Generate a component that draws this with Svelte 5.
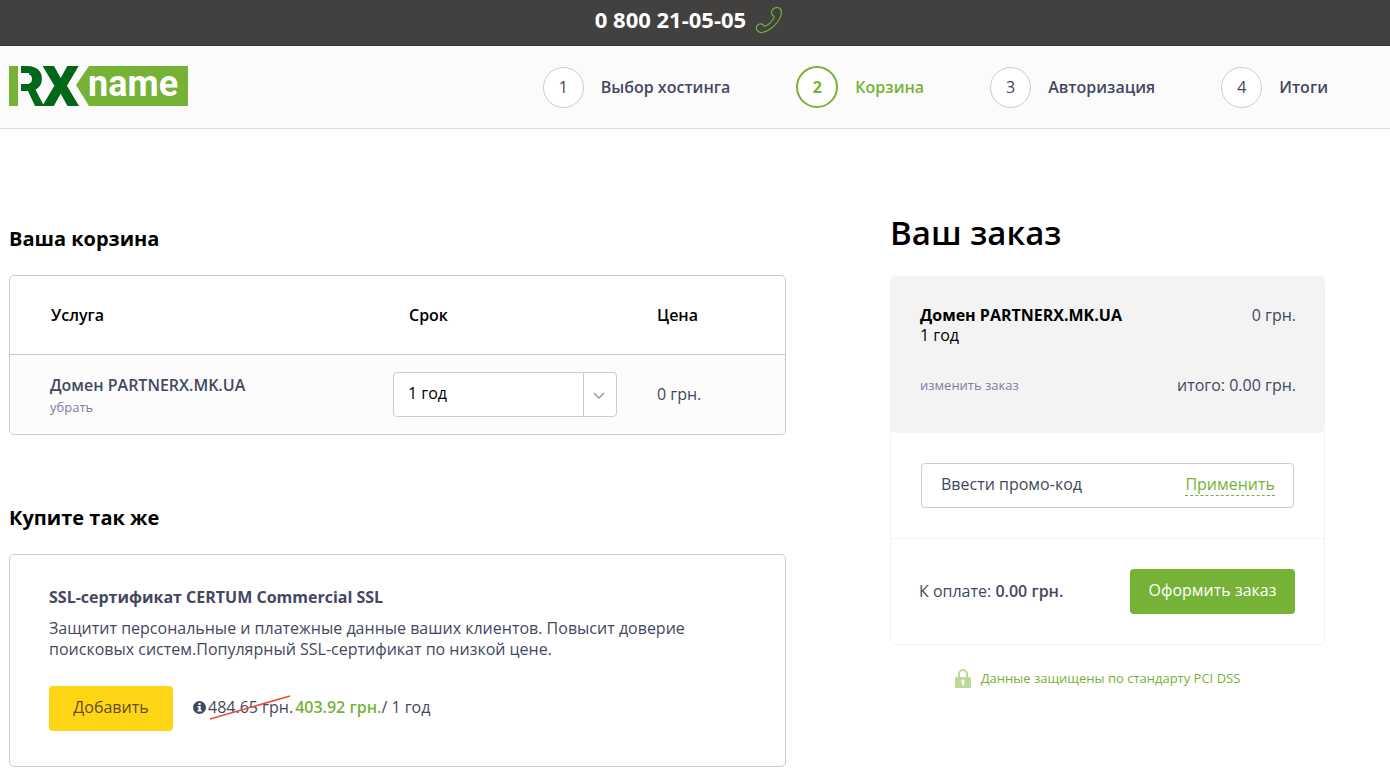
<script>
  const steps = [
    { n: 1, label: 'Выбор хостинга' },
    { n: 2, label: 'Корзина', active: true },
    { n: 3, label: 'Авторизация' },
    { n: 4, label: 'Итоги' }
  ];
  let term = $state('1 год');
</script>

<div class="topbar">
  <a class="phone" href="#call">
    0 800 21-05-05
    <svg width="28" height="28" viewBox="0 0 28 28" fill="none" stroke="#76b236" stroke-width="1.200" aria-hidden="true">
      <path d="M17.5 3.5C19.500 1.200 23 .9 25 2.500C27.500 5.500 26.500 11 22.500 16C17.500 22.500 10.500 26.800 6 26.500C3 26.200.8 23.500 1.500 20.800C2.200 18.600 5.500 17.300 7.300 18.100C8.600 18.700 8.300 20.300 10.200 20.200C13.500 19 17.500 15 19 11.500C19.800 9.500 17.500 9.800 16.800 8.200C16.300 6.500 16.500 4.800 17.500 3.500Z" />
    </svg>
  </a>
</div>

<header>
  <a class="logo" href="#home" aria-label="RXname">
    <svg width="180" height="40" viewBox="0 0 180 40" aria-hidden="true">
      <path d="M80 0H179V40H80L67 19Z" fill="#76b236" />
      <text class="mark" x="0" y="39">RX</text>
      <path d="M0 0H12V40H0ZM11 7H20V18H11ZM11 25H19L26 40H11Z" fill="#fbfbfb" />
      <rect width="9" height="40" fill="#76b236" />
      <text class="word" x="79" y="30">name</text>
    </svg>
  </a>
  <ol class="steps">
    {#each steps as step}
      <li class:active={step.active}>
        <span class="num">{step.n}</span>
        <span>{step.label}</span>
      </li>
    {/each}
  </ol>
</header>

<main>
  <div class="left">
    <h2>Ваша корзина</h2>
    <table class="card">
      <colgroup><col class="c1" /><col class="c2" /><col class="c3" /></colgroup>
      <thead>
        <tr><th>Услуга</th><th class="term">Срок</th><th>Цена</th></tr>
      </thead>
      <tbody>
        <tr>
          <td>
            <div class="service">Домен PARTNERX.MK.UA</div>
            <a class="small" href="#remove">убрать</a>
          </td>
          <td>
            <div class="select">
              <select bind:value={term} aria-label="Срок">
                <option>1 год</option>
                <option>2 года</option>
              </select>
              <svg width="12" height="8" viewBox="0 0 12 8" fill="none" stroke="#999" stroke-width="1.500" aria-hidden="true"><path d="M1 1l5 5 5-5" /></svg>
            </div>
          </td>
          <td>0 грн.</td>
        </tr>
      </tbody>
    </table>

    <h2 class="also">Купите так же</h2>
    <section class="card offer">
      <h3>SSL-сертификат CERTUM Commercial SSL</h3>
      <p>Защитит персональные и платежные данные ваших клиентов. Повысит доверие поисковых систем.Популярный SSL-сертификат по низкой цене.</p>
      <div class="buy">
        <button class="add" type="button">Добавить</button>
        <div class="price">
          <svg class="info" width="13" height="13" viewBox="0 0 13 13" aria-hidden="true">
            <circle cx="6.500" cy="6.500" r="6.500" fill="#434861" />
            <path d="M5.500 2h2.200v2H5.500ZM4.500 5h3.200v4h1v1.500H4.500V9h1V6.500h-1Z" fill="#fff" />
          </svg>
          <span class="old">484.65 грн.
            <svg width="82" height="25" viewBox="0 0 82 25" aria-hidden="true"><path d="M1 24L81 1" stroke="#e74c3c" stroke-width="1.500" /></svg>
          </span>
          <span><b>403.92 грн.</b>/ 1 год</span>
        </div>
      </div>
    </section>
  </div>

  <aside>
    <h1>Ваш заказ</h1>
    <div class="order">
      <div class="summary">
        <div class="line">
          <div class="item"><b>Домен PARTNERX.MK.UA</b><br />1 год</div>
          <span>0 грн.</span>
        </div>
        <div class="line total">
          <a class="small" href="#edit">изменить заказ</a>
          <span>итого: 0.00 грн.</span>
        </div>
      </div>
      <form class="promo" onsubmit={(e) => e.preventDefault()}>
        <div class="field">
          <input type="text" placeholder="Ввести промо-код" aria-label="Ввести промо-код" />
          <button type="submit">Применить</button>
        </div>
      </form>
      <div class="pay">
        <span>К оплате: <b>0.00 грн.</b></span>
        <button type="button">Оформить заказ</button>
      </div>
    </div>
    <div class="secure">
      <svg width="16" height="19" viewBox="0 0 16 19" aria-hidden="true">
        <path d="M4 9V5a4 4 0 0 1 8 0v4" fill="none" stroke="#bbd99b" stroke-width="2" />
        <rect x="0" y="8" width="16" height="11" rx="1.500" fill="#bbd99b" />
        <path d="M8 10.500a1.800 1.800 0 0 1 1 3.200V16H7v-2.300a1.800 1.800 0 0 1 1-3.200Z" fill="#fff" />
      </svg>
      <span>Данные защищены по стандарту PCI DSS</span>
    </div>
  </aside>
</main>

<style>
  :global(body) {
    margin: 0;
    background: #fff;
    color: #434861;
    font: 16px/21px "Open Sans", sans-serif;
  }
  * { box-sizing: border-box; }
  a { color: inherit; text-decoration: none; }
  button, input, select { font: inherit; color: inherit; }
  button { cursor: pointer; border: 0; }
  h1, h2, h3, p { margin: 0; }

  .topbar {
    display: flex;
    justify-content: center;
    height: 46px;
    padding: 6px 12px 0 0;
    background: #434140;
    border-bottom: 1px solid #383635;
  }
  .phone {
    display: flex;
    gap: 9px;
    color: #fff;
    font-size: 22px;
    font-weight: 700;
    line-height: 26px;
  }

  header {
    display: flex;
    justify-content: space-between;
    align-items: center;
    height: 83px;
    padding: 0 62px 0 9px;
    background: #fbfbfb;
    border-bottom: 1px solid #ddd;
  }
  .logo { padding-bottom: 2px; }
  .logo svg { display: block; overflow: visible; }
  .mark {
    font: 700 54px Roboto, sans-serif;
    fill: #006818;
    stroke: #006818;
    stroke-width: 2px;
  }
  .word { font: 700 36px Roboto, sans-serif; fill: #fff; }
  .steps {
    display: flex;
    gap: 66px;
    margin: 0;
    padding: 0;
    list-style: none;
    font-weight: 600;
  }
  .steps li { display: flex; align-items: center; gap: 17px; }
  .num {
    display: grid;
    place-items: center;
    width: 41px;
    height: 41px;
    border: 1px solid #ccc;
    border-radius: 50%;
    background: #fff;
    font-weight: 400;
  }
  .active { color: #76b236; }
  .active .num {
    width: 42px;
    height: 42px;
    border: 2px solid #76b236;
    font-weight: 700;
  }

  main {
    display: grid;
    grid-template-columns: 777fr 435fr;
    gap: 104px;
    padding: 84px 65px 13px 9px;
  }
  h2 {
    padding-top: 12px;
    color: #000;
    font-size: 20px;
    font-weight: 700;
    line-height: 28px;
  }
  h2.also { margin-top: 57px; }
  .card {
    width: 100%;
    margin-top: 22px;
    border: 1px solid #ccc;
    border-radius: 5px;
  }
  table {
    table-layout: fixed;
    border-collapse: separate;
    border-spacing: 0;
    overflow: hidden;
  }
  .c1 { width: 383px; }
  .c2 { width: 264px; }
  th {
    height: 78px;
    padding: 0;
    color: #000;
    font-weight: 600;
    text-align: left;
  }
  th:first-child { padding-left: 41px; }
  .term { padding-left: 16px; }
  td {
    height: 80px;
    padding: 0;
    background: #fcfcfc;
    border-top: 1px solid #ccc;
  }
  td:first-child { padding: 4px 0 0 40px; }
  .service { font-weight: 600; }
  .small { color: #7a7f9a; font-size: 13px; }
  .select {
    display: flex;
    align-items: center;
    position: relative;
    width: 224px;
    height: 45px;
    background: #fff;
    border: 1px solid #ccc;
    border-radius: 4px;
  }
  select {
    appearance: none;
    width: 100%;
    height: 100%;
    padding: 0 48px 2px 14px;
    border: 0;
    background: linear-gradient(#ccc, #ccc) right 32px top / 1px 100% no-repeat;
    color: #000;
  }
  .select svg { position: absolute; right: 11px; top: 19px; pointer-events: none; }

  .offer { padding: 32px 39px 35px; }
  h3 { font-size: 16px; font-weight: 700; line-height: 21px; }
  .offer p { max-width: 660px; margin-top: 10px; }
  .buy { display: flex; align-items: center; gap: 20px; margin-top: 26px; }
  .add {
    width: 124px;
    height: 45px;
    padding: 0 0 2px;
    border-radius: 4px;
    background: #ffd616;
    color: #5f4d20;
  }
  .price { display: flex; align-items: center; gap: 2px; padding-bottom: 2px; }
  .price b { color: #76b236; font-weight: 600; }
  .old { position: relative; }
  .old svg { position: absolute; left: 1px; bottom: -2px; }

  h1 {
    color: #000;
    font-size: 33px;
    font-weight: 600;
    line-height: 40px;
  }
  .order { margin-top: 23px; border: 1px solid #f3f3f3; border-radius: 5px; }
  .summary {
    padding: 28px 28px 38px 29px;
    background: #f3f3f3;
    border-radius: 0 0 5px 5px;
    line-height: 20px;
  }
  .line { display: flex; justify-content: space-between; }
  .item { color: #000; }
  .total { margin-top: 30px; }
  .promo { padding: 30px; border-bottom: 1px solid #f3f3f3; }
  .field {
    display: flex;
    justify-content: space-between;
    align-items: flex-start;
    height: 45px;
    padding: 10px 18px 0 19px;
    border: 1px solid #ccc;
    border-radius: 4px;
  }
  .field input {
    flex: 1;
    min-width: 0;
    height: 21px;
    padding: 0;
    border: 0;
    outline: 0;
    background: none;
  }
  .field input::placeholder { color: #434861; opacity: 1; }
  .field button {
    padding: 0;
    background: none;
    color: #76b236;
    border-bottom: 1px dashed #76b236;
  }
  .pay {
    display: flex;
    justify-content: space-between;
    align-items: center;
    padding: 30px 29px 30px 28px;
  }
  .pay b { font-weight: 600; }
  .pay button {
    width: 165px;
    height: 45px;
    padding: 0 0 2px;
    border-radius: 4px;
    background: #76b236;
    color: #fff;
  }
  .secure {
    display: flex;
    justify-content: center;
    align-items: center;
    gap: 10px;
    margin: 23px 20px 0 0;
    color: #76b236;
    font-size: 13px;
  }
</style>
